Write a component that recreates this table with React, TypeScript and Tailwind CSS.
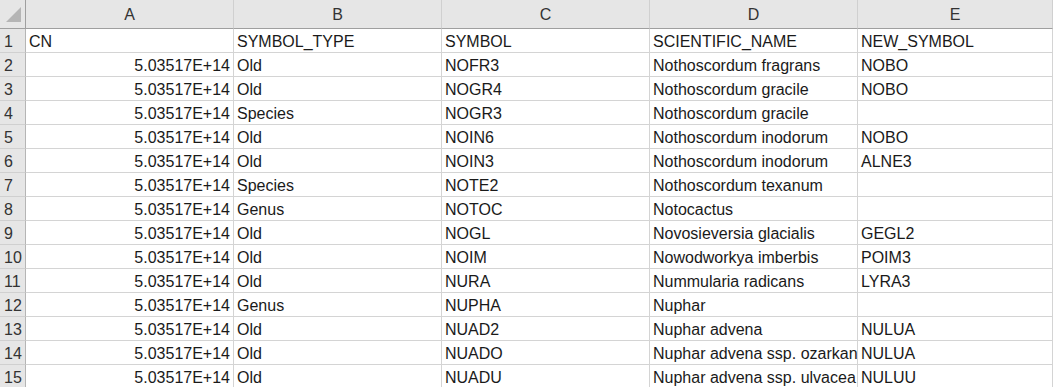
const COLS = ["A", "B", "C", "D", "E"];

const ROWS: [string, string, string, string, string][] = [
  ["CN", "SYMBOL_TYPE", "SYMBOL", "SCIENTIFIC_NAME", "NEW_SYMBOL"],
  ["5.03517E+14", "Old", "NOFR3", "Nothoscordum fragrans", "NOBO"],
  ["5.03517E+14", "Old", "NOGR4", "Nothoscordum gracile", "NOBO"],
  ["5.03517E+14", "Species", "NOGR3", "Nothoscordum gracile", ""],
  ["5.03517E+14", "Old", "NOIN6", "Nothoscordum inodorum", "NOBO"],
  ["5.03517E+14", "Old", "NOIN3", "Nothoscordum inodorum", "ALNE3"],
  ["5.03517E+14", "Species", "NOTE2", "Nothoscordum texanum", ""],
  ["5.03517E+14", "Genus", "NOTOC", "Notocactus", ""],
  ["5.03517E+14", "Old", "NOGL", "Novosieversia glacialis", "GEGL2"],
  ["5.03517E+14", "Old", "NOIM", "Nowodworkya imberbis", "POIM3"],
  ["5.03517E+14", "Old", "NURA", "Nummularia radicans", "LYRA3"],
  ["5.03517E+14", "Genus", "NUPHA", "Nuphar", ""],
  ["5.03517E+14", "Old", "NUAD2", "Nuphar advena", "NULUA"],
  ["5.03517E+14", "Old", "NUADO", "Nuphar advena ssp. ozarkana", "NULUA"],
  ["5.03517E+14", "Old", "NUADU", "Nuphar advena ssp. ulvacea", "NULUU"],
];

export default function App() {
  return (
    <div className="h-[387px] w-[1053px] overflow-hidden bg-white font-['Liberation_Sans',Arial,sans-serif] text-[16px] text-[#1a1a1a]">
      <div className="grid grid-cols-[26px_208px_208px_208px_208px_1fr] grid-rows-[29px]">
        {/* corner */}
        <div className="flex h-[29px] items-end justify-end border-b border-r border-[#9f9f9f] bg-[#e6e6e6] pb-[6px] pr-[4px]">
          <svg width="15" height="15" viewBox="0 0 15 15">
            <polygon points="15,0 15,15 0,15" fill="#b5b5b5" />
          </svg>
        </div>
        {COLS.map((c) => (
          <div
            key={c}
            className="flex h-[29px] items-center justify-center border-b border-r border-b-[#9f9f9f] border-r-[#d0d0d0] bg-[#e6e6e6] pt-[2px] text-[#333]"
          >
            {c}
          </div>
        ))}

        {ROWS.map((r, i) => (
          <Row key={i} n={i + 1} cells={r} />
        ))}
      </div>
    </div>
  );
}

function Row({ n, cells }: { n: number; cells: string[] }) {
  return (
    <>
      <div className="flex h-[24px] items-center border-b border-r border-b-[#d0d0d0] border-r-[#b5b5b5] bg-[#e6e6e6] pl-[4px] pt-[2px] text-[#333]">
        {n}
      </div>
      {cells.map((v, j) => (
        <div
          key={j}
          className={
            "flex h-[24px] items-center overflow-hidden whitespace-nowrap border-b border-r border-[#d4d4d4] bg-white px-[3px] pt-[2px] " +
            (j === 0 && n > 1 ? "justify-end" : "justify-start")
          }
        >
          {v}
        </div>
      ))}
    </>
  );
}
